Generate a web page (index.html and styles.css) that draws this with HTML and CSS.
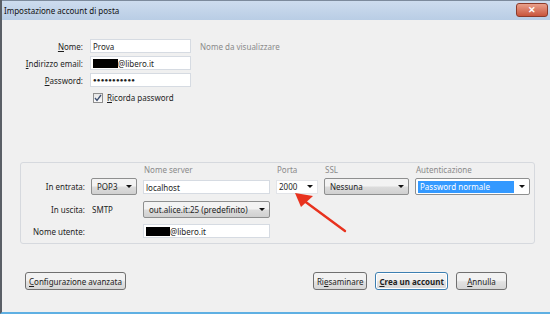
FILE: index.html
```html
<!DOCTYPE html>
<html lang="it">
<head>
    <meta charset="UTF-8">
    <title>Impostazione account di posta</title>
    <link rel="stylesheet" href="styles.css">
</head>
<body>
    <div class="window">
        <div class="titlebar">
            <span class="title">Impostazione account di posta</span>
            <span class="close">&#x2715;</span>
        </div>
        <div class="content">
            <div class="identity">
                <label class="lbl"><u>N</u>ome:</label>
                <div class="field">Prova</div>
                <span class="hint">Nome da visualizzare</span>

                <label class="lbl"><u>I</u>ndirizzo email:</label>
                <div class="field"><span class="redact r1"></span>@libero.it</div>
                <span></span>

                <label class="lbl"><u>P</u>assword:</label>
                <div class="field dots">&#x25CF;&#x25CF;&#x25CF;&#x25CF;&#x25CF;&#x25CF;&#x25CF;&#x25CF;&#x25CF;&#x25CF;&#x25CF;</div>
                <span></span>

                <span></span>
                <div class="check-row">
                    <span class="checkbox">
                        <svg width="8" height="8" viewBox="0 0 8 8"><path d="M1 4 L3 6.5 L7 1" fill="none" stroke="#3d4f70" stroke-width="1.3"/></svg>
                    </span>
                    <span><u>R</u>icorda password</span>
                </div>
            </div>

            <div class="servers">
                <span></span>
                <span></span>
                <span class="head">Nome server</span>
                <span class="head">Porta</span>
                <span class="head">SSL</span>
                <span class="head">Autenticazione</span>

                <span class="lbl">In entrata:</span>
                <div class="select">POP3<span class="arrow"></span></div>
                <div class="field">localhost</div>
                <div class="field port">2000<span class="arrow"></span></div>
                <div class="select">Nessuna<span class="arrow"></span></div>
                <div class="select auth"><span class="picked">Password normale</span><span class="arrow"></span></div>

                <span class="lbl">In uscita:</span>
                <span class="plain">SMTP</span>
                <div class="select">out.alice.it:25 (predefinito)<span class="arrow"></span></div>
                <span></span>
                <span></span>
                <span></span>

                <span class="lbl span2">Nome utente:</span>
                <div class="field"><span class="redact r2"></span>@libero.it</div>
            </div>

            <div class="buttons">
                <button class="btn"><u>C</u>onfigurazione avanzata</button>
                <span class="spacer"></span>
                <button class="btn">Ri<u>e</u>saminare</button>
                <button class="btn strong"><u>C</u>rea un account</button>
                <button class="btn wide"><u>A</u>nnulla</button>
            </div>
        </div>

        <svg class="pointer" width="70" height="50" viewBox="0 0 70 50">
            <path d="M52 41 L10 10" stroke="#e8321e" stroke-width="2.4" stroke-linecap="round"/>
            <path d="M2 3 L20 6 L8 17 Z" fill="#e8321e"/>
        </svg>
    </div>
</body>
</html>
```

FILE: styles.css
```css
body {
    margin: 0;
    font-family: "Noto Sans", "Liberation Sans", sans-serif;
    font-size: 8px;
    color: #1e1e1e;
}
u {
    text-decoration: underline;
}
.window {
    position: relative;
    width: 550px;
    height: 314px;
    box-sizing: border-box;
    border-left: 2px solid #5a5f66;
    border-bottom: 2px solid #5fb0e3;
    background-color: #f0f0f0;
    overflow: hidden;
}
.titlebar {
    height: 20px;
    display: flex;
    align-items: center;
    justify-content: space-between;
    padding: 0 2px 0 2px;
    background: linear-gradient(#cddcee, #b9cde5);
    border-top: 1px solid #7c8a9c;
    box-sizing: border-box;
}
.title {
    font-size: 8px;
    color: #111;
}
.close {
    width: 32px;
    height: 14px;
    margin-top: -2px;
    display: flex;
    align-items: center;
    justify-content: center;
    color: #fff;
    font-size: 9px;
    font-weight: bold;
    background: linear-gradient(#e9a08b, #c9553c);
    border: 1px solid #8c3b2a;
    border-radius: 3px;
    box-sizing: border-box;
}
.content {
    padding: 19px 0 0 0;
}
.identity {
    display: grid;
    grid-template-columns: 81px 101px auto;
    column-gap: 7px;
    row-gap: 3px;
    align-items: center;
}
.lbl {
    text-align: right;
    white-space: nowrap;
}
.field {
    height: 14px;
    line-height: 13px;
    box-sizing: border-box;
    background: #fff;
    border: 1px solid #d6dbe2;
    padding: 0 2px;
    white-space: nowrap;
    position: relative;
}
.hint {
    color: #8a8a8a;
    padding-left: 2px;
}
.dots {
    font-size: 6px;
    letter-spacing: 0.2px;
}
.redact {
    display: inline-block;
    background: #000;
    height: 9px;
    vertical-align: -1px;
}
.r1 {
    width: 25px;
}
.r2 {
    width: 24px;
}
.check-row {
    grid-column: 2 / 4;
    display: flex;
    align-items: center;
    gap: 4px;
    padding-left: 3px;
    margin-top: 2px;
}
.checkbox {
    width: 10px;
    height: 10px;
    box-sizing: border-box;
    border: 1px solid #8f8f8f;
    background: linear-gradient(#e6e6e6, #fbfbfb);
    display: flex;
    align-items: center;
    justify-content: center;
}
.servers {
    margin: 59px 15px 0 18px;
    padding: 2px 4px 5px 4px;
    border: 1px solid #d6d9de;
    border-radius: 3px;
    display: grid;
    grid-template-columns: 60px 46px 127px 42px 85px 115px;
    column-gap: 6px;
    row-gap: 6px;
    align-items: center;
}
.head {
    color: #8a8a8a;
    height: 10px;
    line-height: 10px;
    padding-left: 1px;
    margin-bottom: -3px;
}
.select {
    height: 17px;
    box-sizing: border-box;
    border: 1px solid #8e8f8f;
    border-radius: 2px;
    background: linear-gradient(#f3f3f3 45%, #dcdcdc 55%, #d0d0d0);
    display: flex;
    align-items: center;
    justify-content: space-between;
    padding: 0 4px 0 5px;
    white-space: nowrap;
}
.arrow {
    width: 0;
    height: 0;
    border-left: 3px solid transparent;
    border-right: 3px solid transparent;
    border-top: 3px solid #111;
}
.port {
    display: flex;
    align-items: center;
    justify-content: space-between;
    padding-right: 4px;
    border-color: #e2e4e8;
}
.auth {
    background: #fff;
    padding: 0 4px 0 2px;
}
.picked {
    flex: 1;
    background: #3399ff;
    color: #fff;
    height: 12px;
    line-height: 12px;
    padding-left: 2px;
    margin-right: 5px;
}
.plain {
    padding-left: 1px;
}
.span2 {
    grid-column: 1 / 3;
    text-align: left;
    padding-left: 8px;
}
.buttons {
    display: flex;
    gap: 8px;
    margin: 28px 43px 0 23px;
}
.spacer {
    flex: 1;
}
.btn {
    height: 18px;
    font-family: inherit;
    font-size: 8px;
    color: #1e1e1e;
    padding: 0 3px;
    border: 1px solid #707070;
    border-radius: 3px;
    background: linear-gradient(#f2f2f2 45%, #e2e2e2 55%, #d6d6d6);
    white-space: nowrap;
}
.strong {
    font-weight: bold;
    border-color: #3c7fb1;
    box-shadow: inset 0 0 0 1px #fff;
}
.wide {
    width: 51px;
}
.pointer {
    position: absolute;
    left: 291px;
    top: 190px;
}
```
